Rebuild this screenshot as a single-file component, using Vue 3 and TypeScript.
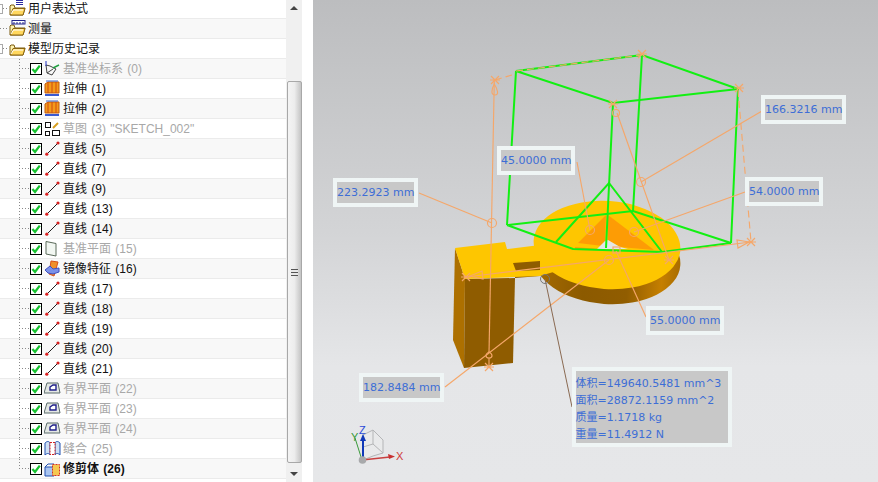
<template>
  <div class="page">
    <div class="tree">
      <div
        v-for="(row, i) in rows"
        :key="i"
        class="row"
        :class="{ alt: i % 2 === 1, off: row.off, strong: row.strong }"
      >
        <template v-if="row.folder">
          <span class="stub" :class="{ boxed: row.folder !== 'measure' }" />
          <svg class="folder" width="17" height="17" viewBox="0 0 17 17">
            <path d="M1 6V15H14L16 8H6L5 5H2Z" fill="#fff3b0" stroke="#7a5a10" />
            <path d="M1.5 15L4 8.5H16L14 15Z" fill="#ffd75e" stroke="#8a6510" />
            <path d="M2 14L4.5 10H14" fill="none" stroke="#fff" />
            <g v-if="row.folder === 'expr'" stroke="#2a2aa0">
              <path d="M7 0.5H14M7 2.5H14M7 4.5H14" />
            </g>
            <g v-if="row.folder === 'measure'">
              <rect x="3" y="0.5" width="13" height="3.5" fill="#fff" stroke="#22228a" />
              <path d="M5 2V4M8 2V4M11 2V4M14 2V4" stroke="#22228a" />
            </g>
          </svg>
        </template>
        <template v-else>
          <span class="guide" :class="{ last: i === rows.length - 1 }" />
          <svg class="check" width="12" height="12" viewBox="0 0 12 12">
            <rect x="0.5" y="0.5" width="11" height="11" fill="#fff" stroke="#000" />
            <path d="M2.4 6L5 9L9.8 2.6" fill="none" stroke="#16c22f" stroke-width="2.3" />
          </svg>
          <svg class="icon" width="17" height="17" viewBox="0 0 17 17">
            <g v-if="row.icon === 'csys'" fill="none">
              <path d="M2 5L3 13L8 15L12 9L6 6Z" stroke="#444" />
              <path d="M3 13L9 9" stroke="#444" />
              <path d="M2 1V6" stroke="#2030c0" />
              <path d="M9 8L15 5" stroke="#20a040" stroke-width="1.4" />
            </g>
            <g v-else-if="row.icon === 'extrude'">
              <path d="M1 4L4 2H15V13H1Z" fill="#f39a1a" stroke="#c05a10" />
              <path d="M4 2V13M8 2V13M12 2V13" stroke="#d04a10" />
              <path d="M1 14H15V16H1Z" fill="#3a5ad0" />
              <path d="M2 1H14" stroke="#3a6ad0" />
            </g>
            <g v-else-if="row.icon === 'sketch'" fill="none" stroke="#111">
              <rect x="1.5" y="2.5" width="5" height="5" />
              <rect x="1.5" y="11.5" width="4" height="4" />
              <rect x="8.5" y="10.5" width="7" height="5" />
              <path d="M9 8L14 3" stroke="#d8a020" stroke-width="2" />
            </g>
            <g v-else-if="row.icon === 'line'">
              <path d="M3 14L14 3" stroke="#222" />
              <circle cx="2.8" cy="14.2" r="1.6" fill="#d82020" />
              <circle cx="14" cy="3" r="1.6" fill="#d82020" />
            </g>
            <path
              v-else-if="row.icon === 'plane'"
              d="M2 1.5L12 3.5V16L2 14Z"
              fill="#f2f7f2"
              stroke="#5a6a5a"
            />
            <g v-else-if="row.icon === 'mirror'">
              <path d="M7 1L14 2L10 16L5 14Z" fill="#f0902a" stroke="#d8501a" />
              <path d="M1 10L6 6L9 9L15 8L15 12L9 14L4 13Z" fill="#7a90e8" stroke="#4050c0" />
            </g>
            <g v-else-if="row.icon === 'bounded'">
              <path d="M3 3H14L16 13H0Z" fill="#e4e8e4" stroke="#5a6a6a" />
              <path d="M6 10V7L9 5H12V10Z" fill="#fff" stroke="#20208a" stroke-width="1.4" />
            </g>
            <g v-else-if="row.icon === 'sew'">
              <path d="M1 3C3 1 5 1 6 3V15C5 13 3 13 1 15Z" fill="#cfe0f4" stroke="#2050b0" />
              <path d="M11 3C12 1 14 1 16 3V15C14 13 12 13 11 15Z" fill="#cfe0f4" stroke="#2050b0" />
              <rect x="6" y="2.5" width="5" height="12" fill="#fff" stroke="#d02020" stroke-dasharray="2 1" />
            </g>
            <g v-else-if="row.icon === 'trim'">
              <path d="M1 7H10V16H1Z" fill="#a8c4f0" stroke="#2050b0" />
              <path d="M1 7L4 4H10" fill="none" stroke="#2050b0" />
              <rect x="8.5" y="4.5" width="7" height="11" fill="#f5c850" stroke="#d83020" stroke-dasharray="2 1" />
            </g>
          </svg>
        </template>
        <span class="label">{{ row.text }}</span>
      </div>
    </div>

    <div class="scrollbar">
      <span class="arrow up" />
      <div class="thumb"><span class="grip" /></div>
      <span class="arrow down" />
    </div>

    <div class="gutter" />

    <div class="view">
      <svg class="scene" width="565" height="482" viewBox="313 0 565 482">
        <defs>
          <linearGradient id="rim" x1="0" x2="1" y1="0" y2="0">
            <stop offset="0" stop-color="#a86c00" />
            <stop offset="0.35" stop-color="#8c5a00" />
            <stop offset="0.65" stop-color="#915d00" />
            <stop offset="0.88" stop-color="#c57f00" />
            <stop offset="1" stop-color="#a96d00" />
          </linearGradient>
        </defs>

        <!-- part -->
        <ellipse cx="607" cy="260" rx="73.5" ry="44" transform="rotate(4 607 260)" fill="url(#rim)" />
        <polygon points="455,248 453,340 464,368 465,279" fill="#ad7000" />
        <polygon points="465,279 464,368 513,363 515,278" fill="#8f5c00" />
        <polygon points="515,278 540,276 540,262 515,264" fill="#8f5c00" />
        <ellipse cx="607" cy="245" rx="73.5" ry="44" transform="rotate(4 607 245)" fill="#fec600" />
        <polygon points="455,248 505,242 507,249 540,245 560,270 540,276 465,279" fill="#fec600" />
        <polygon points="513,263 540,261 540,270 516,271" fill="#8f5c00" />
        <polygon points="606,215 578,243 603,246 605,241" fill="#fd9c05" />
        <polygon points="608,215 654,250 620,247 608,240" fill="#fd9c05" />
        <polygon points="575,247 598,249 575,250" fill="#fd9c05" />
        <polygon points="605,241 608,240 620,247 628,249 597,249" fill="#e4e5e6" />

        <!-- wireframe -->
        <g fill="none" stroke="#12f012" stroke-width="2">
          <polygon points="516,71 642,55 738,89 613,103" />
          <path d="M516,71L507,225M642,55L633,211M738,89L731,243M613,103L606,248" />
          <path d="M507,225L633,211L731,243M507,225L573,249L662,252L731,243" />
          <path d="M556,242L609,183L662,252" />
        </g>

        <!-- dimensions -->
        <g fill="none" stroke="#f5a76a" stroke-width="1.15">
          <path d="M494.3,80L489,353" />
          <path d="M419,193L492,223" />
          <path d="M466,277L751,242" />
          <path d="M738,90L751,242" stroke-dasharray="7 4" />
          <path d="M516,71L642,55M495,80L512,75" stroke-dasharray="7 4" />
          <path d="M762,111L641,182" />
          <path d="M617,113L669,260" />
          <path d="M577,162L590,230" />
          <path d="M745,192L634,232" />
          <path d="M445,387L609,260" />
          <path d="M646,317L616,251" />
          <path d="M494.3,84C491,90 491,95 495,95C499,95 498,90 494.3,84Z" />
          <path d="M489,352C485,354 485,358 489,358C493,358 493,354 489,352ZM489,358V365" />
          <path d="M470,276L482,271L483,279Z" />
          <path d="M749,242L737,240L738,248Z" />
          <circle cx="492" cy="223" r="4.5" />
          <circle cx="641" cy="182" r="4.5" />
          <circle cx="616" cy="113" r="3.5" />
          <circle cx="590" cy="230" r="4.5" />
          <circle cx="634" cy="232" r="4.5" />
          <circle cx="609" cy="260" r="4.5" />
          <rect x="613" y="247" width="7" height="6" />
          <g v-for="(c, i) in crosses" :key="i">
            <path :d="`M${c[0] - 4},${c[1] - 4}L${c[0] + 4},${c[1] + 4}M${c[0] + 4},${c[1] - 4}L${c[0] - 4},${c[1] + 4}M${c[0] - 5},${c[1]}H${c[0] + 5}`" />
          </g>
        </g>
        <path d="M545,279L572,407" fill="none" stroke="#8a6a52" />
        <circle cx="545" cy="279" r="4.5" fill="none" stroke="#777" />

        <!-- triad -->
        <g fill="rgba(255,255,255,0.12)" stroke="#b4b5b7" stroke-width="1">
          <path d="M363,435L373,430L383,440L383,453L373,456L363,460ZM373,430V444L363,447M373,444L383,453" />
        </g>
        <path d="M362,460L390,457" stroke="#c84040" stroke-width="1.5" />
        <path d="M388,454L395,456.5L389,459Z" fill="#c83030" />
        <path d="M362,460L355,438" stroke="#3a9a3a" stroke-width="1" />
        <path d="M363,458V438" stroke="#1038b8" stroke-width="2" />
        <path d="M360,441L363,434L366,441Z" fill="#1038b8" />
        <circle cx="362.5" cy="460" r="3.8" fill="#a8a9ab" />
        <text x="359" y="434" class="axis" fill="#2a4ad8">Z</text>
        <text x="351" y="441" class="axis" fill="#3a9a3a">Y</text>
        <text x="396" y="460" class="axis" fill="#d03a3a">X</text>
      </svg>

      <div
        v-for="tag in tags"
        :key="tag.text"
        class="tag"
        :style="{ left: `${tag.x - 313}px`, top: `${tag.y}px` }"
      >
        {{ tag.text }}
      </div>

      <div class="tag props">
        <div v-for="line in props" :key="line">{{ line }}</div>
      </div>
    </div>
  </div>
</template>

<script setup lang="ts">
interface Row {
  text: string
  folder?: 'expr' | 'measure' | 'plain'
  icon?: string
  off?: boolean
  strong?: boolean
}

const line = (n: number): Row => ({ text: `直线 (${n})`, icon: 'line' })

const rows: Row[] = [
  { text: '用户表达式', folder: 'expr' },
  { text: '测量', folder: 'measure' },
  { text: '模型历史记录', folder: 'plain' },
  { text: '基准坐标系 (0)', icon: 'csys', off: true },
  { text: '拉伸 (1)', icon: 'extrude' },
  { text: '拉伸 (2)', icon: 'extrude' },
  { text: '草图 (3) "SKETCH_002"', icon: 'sketch', off: true },
  line(5),
  line(7),
  line(9),
  line(13),
  line(14),
  { text: '基准平面 (15)', icon: 'plane', off: true },
  { text: '镜像特征 (16)', icon: 'mirror' },
  line(17),
  line(18),
  line(19),
  line(20),
  line(21),
  { text: '有界平面 (22)', icon: 'bounded', off: true },
  { text: '有界平面 (23)', icon: 'bounded', off: true },
  { text: '有界平面 (24)', icon: 'bounded', off: true },
  { text: '缝合 (25)', icon: 'sew', off: true },
  { text: '修剪体 (26)', icon: 'trim', strong: true },
]

const tags = [
  { text: '223.2923 mm', x: 333, y: 178 },
  { text: '45.0000 mm', x: 497, y: 146 },
  { text: '166.3216 mm', x: 761, y: 95 },
  { text: '54.0000 mm', x: 745, y: 177 },
  { text: '55.0000 mm', x: 646, y: 306 },
  { text: '182.8484 mm', x: 359, y: 373 },
]

const props = ['体积=149640.5481 mm^3', '面积=28872.1159 mm^2', '质量=1.1718 kg', '重量=11.4912 N']

const crosses = [
  [495, 80],
  [642, 54],
  [739, 88],
  [613, 104],
  [751, 242],
  [466, 277],
  [489, 367],
  [669, 260],
]
</script>

<style scoped>
.page {
  display: flex;
  width: 878px;
  height: 482px;
  overflow: hidden;
  background: #fff;
  font-family: "Liberation Sans", "Noto Sans CJK SC", sans-serif;
}

.tree {
  width: 286px;
  flex: none;
  margin-top: -1px;
  font-size: 12px;
  color: #111;
}

.row {
  display: flex;
  align-items: center;
  height: 20px;
  box-sizing: border-box;
  border-bottom: 1px solid #ebebeb;
  white-space: nowrap;
  word-spacing: 1px;
}

.row.alt {
  background: #f8f8f8;
}

.row.off {
  color: #a8a8a8;
}

.row.strong {
  font-weight: 700;
}

.label {
  margin-bottom: 2px;
}

.stub {
  width: 9px;
  flex: none;
  height: 1px;
  background: repeating-linear-gradient(to right, #888 0 1px, transparent 1px 3px);
  position: relative;
}

.stub.boxed::before {
  content: "";
  position: absolute;
  left: -6px;
  top: -4px;
  width: 7px;
  height: 8px;
  border: 1px solid #aaa;
  background: #fff;
}

.folder {
  flex: none;
  margin-right: 2px;
}

.guide {
  align-self: stretch;
  width: 11px;
  margin-left: 19px;
  flex: none;
  background:
    repeating-linear-gradient(to bottom, #888 0 1px, transparent 1px 3px) left top / 1px 100% no-repeat,
    repeating-linear-gradient(to right, #888 0 1px, transparent 1px 3px) left 50% / 100% 1px no-repeat;
}

.guide.last {
  background-size: 1px 50%, 100% 1px;
}

.check {
  flex: none;
}

.icon {
  flex: none;
  margin: 0 2px 0 2px;
}

.scrollbar {
  width: 16px;
  flex: none;
  position: relative;
  display: flex;
  flex-direction: column;
  align-items: center;
  background: #f0f0f0;
}

.arrow {
  flex: none;
  width: 0;
  height: 0;
  border-left: 4px solid transparent;
  border-right: 4px solid transparent;
}

.arrow.up {
  margin-top: 6px;
  border-bottom: 4px solid #444;
}

.arrow.down {
  margin-top: 9px;
  border-top: 4px solid #444;
}

.thumb {
  width: 15px;
  height: 382px;
  margin-top: 71px;
  box-sizing: border-box;
  display: flex;
  align-items: center;
  justify-content: center;
  border: 1px solid #a8a8a8;
  border-radius: 2px;
  background: linear-gradient(to right, #f4f4f4, #ececec 50%, #c4c4c4);
}

.grip {
  width: 7px;
  height: 7px;
  background: repeating-linear-gradient(to bottom, #555 0 1px, #e8e8e8 1px 3px);
}

.gutter {
  width: 11px;
  flex: none;
  background: #fff;
}

.view {
  position: relative;
  flex: 1;
  background: linear-gradient(to bottom, #bcbdbf, #d3d4d6 48%, #e5e6e8 76%, #e6e7e9);
}

.scene {
  display: block;
}

.axis {
  font-family: "Liberation Sans", sans-serif;
  font-size: 11px;
}

.tag {
  position: absolute;
  box-sizing: border-box;
  border: 4px solid #eff5f5;
  background: #c8c8c8;
  color: #3d6ed6;
  font-family: "DejaVu Sans", "Noto Sans CJK SC", sans-serif;
  font-size: 11px;
  line-height: 21px;
  white-space: nowrap;
}

.props {
  left: 258.5px;
  top: 367px;
  width: 160px;
  height: 80px;
  padding-top: 4px;
}

.props div {
  line-height: 17px;
}
</style>
